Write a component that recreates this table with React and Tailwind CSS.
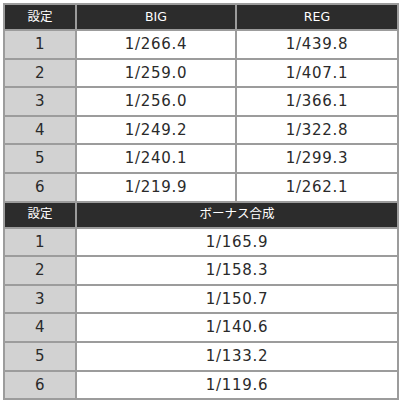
import React from 'react';

const bonus = [
  ['1', '1/266.4', '1/439.8'],
  ['2', '1/259.0', '1/407.1'],
  ['3', '1/256.0', '1/366.1'],
  ['4', '1/249.2', '1/322.8'],
  ['5', '1/240.1', '1/299.3'],
  ['6', '1/219.9', '1/262.1'],
];

const combined = [
  ['1', '1/165.9'],
  ['2', '1/158.3'],
  ['3', '1/150.7'],
  ['4', '1/140.6'],
  ['5', '1/133.2'],
  ['6', '1/119.6'],
];

const th = 'border-2 border-[#9c9c9c] bg-[#2c2c2c] text-white text-[12.5px] font-normal text-center tracking-normal';
const tdSet = 'border-2 border-[#9c9c9c] bg-[#d2d2d2] text-center';
const td = 'border-2 border-[#9c9c9c] bg-white text-center';

const App = () => {
  return (
    <div className="w-[400px] h-[402px] bg-white pt-[3px] pl-[3px]">
      <table
        className="w-[394px] border-collapse table-fixed text-[#2a2a2a] text-[15px] tracking-[0.7px]"
        style={{ fontFamily: '"DejaVu Sans", Verdana, "Noto Sans CJK JP", sans-serif' }}
      >
        <colgroup>
          <col className="w-[72px]" />
          <col className="w-[160px]" />
          <col className="w-[162px]" />
        </colgroup>
        <tbody>
          <tr className="h-[26px]">
            <th className={th}>設定</th>
            <th className={th}>BIG</th>
            <th className={th}>REG</th>
          </tr>
          {bonus.map((row) => (
            <tr key={row[0]} className="h-[28.6px]">
              <td className={tdSet}>{row[0]}</td>
              <td className={td}>{row[1]}</td>
              <td className={td}>{row[2]}</td>
            </tr>
          ))}
          <tr className="h-[26px]">
            <th className={th}>設定</th>
            <th className={th} colSpan={2}>ボーナス合成</th>
          </tr>
          {combined.map((row) => (
            <tr key={row[0]} className="h-[28.6px]">
              <td className={tdSet}>{row[0]}</td>
              <td className={td} colSpan={2}>{row[1]}</td>
            </tr>
          ))}
        </tbody>
      </table>
    </div>
  );
};

export default App;
